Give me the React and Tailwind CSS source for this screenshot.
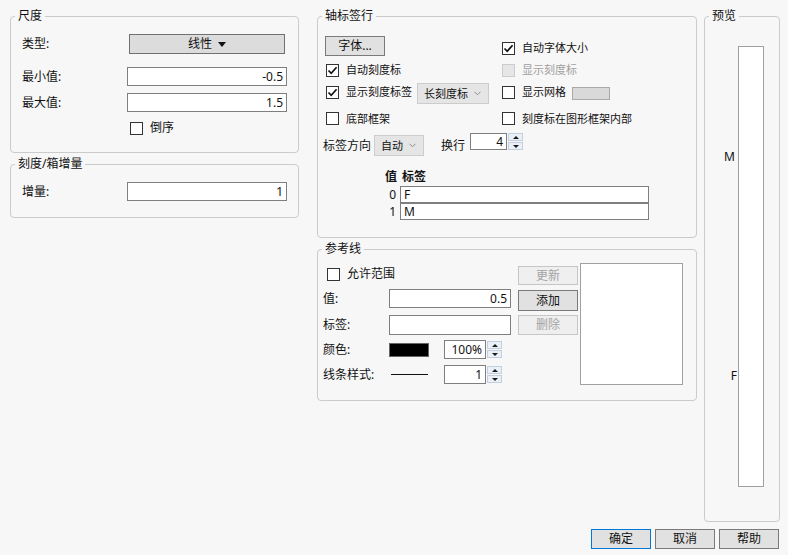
import React from 'react';

const Group = ({ title, className = '', children }) => (
  <fieldset className={`border border-[#cbcbcb] rounded-[4px] min-w-0 ${className}`}>
    <legend className="ml-[4px] px-[3px] text-[12px] leading-[16px] text-[#111]">{title}</legend>
    {children}
  </fieldset>
);

const Check = ({ checked, disabled, className = '' }) => (
  <span
    className={`w-[13px] h-[13px] shrink-0 flex items-center justify-center border ${
      disabled ? 'bg-[#e6e6e6] border-[#cccccc]' : 'bg-white border-[#333333]'
    } ${className}`}
  >
    {checked && (
      <svg width="11" height="11" viewBox="0 0 11 11">
        <path d="M1.5 5.5 L4.2 8.3 L9.6 2.2" fill="none" stroke="#111" strokeWidth="1.7" />
      </svg>
    )}
  </span>
);

const CheckRow = ({ label, checked, disabled, small, className = '' }) => (
  <div className={`flex items-center ${className}`}>
    <Check checked={checked} disabled={disabled} />
    <span
      className={`ml-[7px] leading-[14px] ${small ? 'text-[11px]' : ''} ${disabled ? 'text-[#a0a0a0]' : ''}`}
    >
      {label}
    </span>
  </div>
);

const Field = ({ value = '', className = '', align = 'text-right' }) => (
  <div
    className={`bg-white border border-[#7f7f7f] flex items-center px-[3px] leading-[14px] ${
      align === 'text-right' ? 'justify-end' : 'justify-start'
    } ${className}`}
  >
    {value}
  </div>
);

const Chevron = () => (
  <svg width="7" height="5" viewBox="0 0 7 5">
    <path d="M0.5 0.8 L3.5 3.8 L6.5 0.8" fill="none" stroke="#8a8a8a" strokeWidth="1" />
  </svg>
);

const Combo = ({ label, className = '' }) => (
  <div
    className={`bg-[#e5e5e5] border border-[#cccccc] flex items-center justify-between pl-[6px] pr-[7px] text-[11px] leading-[14px] ${className}`}
  >
    <span>{label}</span>
    <Chevron />
  </div>
);

const Spin = () => (
  <div className="flex flex-col w-[15px] ml-[1px] gap-[1px]">
    {['M1 4 L4 1 L7 4 Z', 'M1 1 L4 4 L7 1 Z'].map((d) => (
      <div key={d} className="h-[8px] bg-[#eaf0f7] border border-[#c3cfdf] flex items-center justify-center">
        <svg width="8" height="5" viewBox="0 0 8 5">
          <path d={d} fill="#1a1a1a" />
        </svg>
      </div>
    ))}
  </div>
);

const Btn = ({ label, disabled, primary, className = '' }) => (
  <div
    className={`flex items-center justify-center leading-[14px] border ${
      disabled
        ? 'bg-[#efefef] border-[#c6c6c6] text-[#a3a3a3]'
        : primary
        ? 'bg-[#e1e1e1] border-[#0078d7]'
        : 'bg-[#e1e1e1] border-[#7a7a7a]'
    } ${className}`}
  >
    {label}
  </div>
);

export default function App() {
  return (
    <div className="w-[788px] h-[555px] bg-[#f7f7f7] text-[12px] text-[#111] font-[family-name:'Noto_Sans','Noto_Sans_CJK_SC',sans-serif] pt-[8px] pl-[10px] pr-[8px] flex flex-col">
      <div className="flex items-start h-[514px]">
        {/* left column */}
        <div className="w-[289px] flex flex-col gap-[3px]">
          <Group title="尺度" className="h-[145px]">
            <div className="pl-[11px] flex flex-col">
              <div className="flex items-center h-[20px] mt-[10px]">
                <span className="w-[105px]">类型:</span>
                <div className="w-[156px] h-[20px] ml-[2px] bg-[#dcdcdc] border border-[#707070] flex items-center justify-center gap-[6px]">
                  <span className="leading-[14px]">线性</span>
                  <svg width="8" height="5" viewBox="0 0 8 5">
                    <path d="M0 0 L8 0 L4 5 Z" fill="#111" />
                  </svg>
                </div>
              </div>
              <div className="flex items-center h-[19px] mt-[13px]">
                <span className="w-[105px]">最小值:</span>
                <Field value="-0.5" className="w-[160px] h-[19px]" />
              </div>
              <div className="flex items-center h-[19px] mt-[7px]">
                <span className="w-[105px]">最大值:</span>
                <Field value="1.5" className="w-[160px] h-[19px]" />
              </div>
              <CheckRow label="倒序" className="mt-[9px] ml-[108px]" />
            </div>
          </Group>
          <Group title="刻度/箱增量" className="h-[62px]">
            <div className="pl-[11px] flex items-center h-[19px] mt-[10px]">
              <span className="w-[105px]">增量:</span>
              <Field value="1" className="w-[160px] h-[19px]" />
            </div>
          </Group>
        </div>

        {/* middle column */}
        <div className="w-[380px] ml-[18px] flex flex-col gap-[3px]">
          <Group title="轴标签行" className="h-[230px]">
            <div className="pl-[5px] flex flex-col">
              <div className="flex items-start h-[24px] mt-[12px]">
                <div className="w-[179px]">
                  <Btn label="字体..." className="w-[60px] h-[20px] ml-[2px]" />
                </div>
                <CheckRow label="自动字体大小" checked small className="h-[24px]" />
              </div>
              <div className="flex items-center h-[20px]">
                <div className="w-[179px]">
                  <CheckRow label="自动刻度标" checked small className="ml-[3px]" />
                </div>
                <CheckRow label="显示刻度标" disabled small />
              </div>
              <div className="flex items-start h-[21px] mt-[3px]">
                <div className="w-[179px] flex items-start">
                  <CheckRow label="显示刻度标签" checked small className="ml-[3px] mt-[2px]" />
                  <Combo label="长刻度标" className="w-[72px] h-[21px] ml-[5px]" />
                </div>
                <CheckRow label="显示网格" small className="mt-[2px]" />
                <div className="w-[38px] h-[13px] mt-[4px] ml-[6px] bg-[#d9d9d9] border border-[#a9a9a9]" />
              </div>
              <div className="flex items-center h-[21px] mt-[4px]">
                <div className="w-[179px]">
                  <CheckRow label="底部框架" small className="ml-[3px]" />
                </div>
                <CheckRow label="刻度标在图形框架内部" small />
              </div>
              <div className="flex items-start h-[23px] mt-[4px]">
                <span className="leading-[21px] mt-[2px]">标签方向</span>
                <Combo label="自动" className="w-[50px] h-[21px] mt-[2px] ml-[3px]" />
                <span className="leading-[21px] mt-[2px] ml-[17px]">换行</span>
                <Field value="4" className="w-[37px] h-[17px] ml-[5px]" />
                <Spin />
              </div>
              <div className="grid grid-cols-[18px_249px] gap-x-[3px] ml-[56px] mt-[14px]">
                <span className="text-right font-bold leading-[14px]">值</span>
                <span className="pl-[2px] font-bold leading-[14px]">标签</span>
                <span className="text-right pr-[1px] leading-[17px] mt-[2px]">0</span>
                <Field value="F" align="left" className="h-[17px] mt-[2px]" />
                <span className="text-right pr-[1px] leading-[17px]">1</span>
                <Field value="M" align="left" className="h-[17px]" />
              </div>
            </div>
          </Group>

          <Group title="参考线" className="h-[160px]">
            <div className="pl-[5px] flex items-start">
              <div className="w-[188px] flex flex-col">
                <CheckRow label="允许范围" className="mt-[10px] ml-[4px]" />
                <div className="flex items-center mt-[8px]">
                  <span className="w-[66px]">值:</span>
                  <Field value="0.5" className="w-[122px] h-[19px]" />
                </div>
                <div className="flex items-center mt-[7px]">
                  <span className="w-[66px]">标签:</span>
                  <Field className="w-[122px] h-[20px]" />
                </div>
                <div className="flex items-center mt-[5px]">
                  <span className="w-[66px]">颜色:</span>
                  <div className="w-[40px] h-[14px] bg-black border border-[#666]" />
                  <Field value="100%" className="w-[42px] h-[19px] ml-[15px]" />
                  <Spin />
                </div>
                <div className="flex items-center mt-[6px]">
                  <span className="w-[66px]">线条样式:</span>
                  <div className="w-[37px] h-[1px] bg-[#111] ml-[2px]" />
                  <Field value="1" className="w-[42px] h-[19px] ml-[16px]" />
                  <Spin />
                </div>
              </div>
              <div className="ml-[7px] w-[60px] flex flex-col">
                <Btn label="更新" disabled className="h-[19px] mt-[9px]" />
                <Btn label="添加" className="h-[21px] mt-[5px] bg-[#dcdcdc]" />
                <Btn label="删除" disabled className="h-[20px] mt-[4px]" />
              </div>
              <div className="ml-[2px] mt-[6px] w-[103px] h-[122px] bg-white border border-[#a0a0a0]" />
            </div>
          </Group>
        </div>

        {/* preview column */}
        <Group title="预览" className="w-[76px] h-[514px] ml-[7px]">
          <div className="relative ml-[33px] mt-[22px] w-[26px] h-[441px] bg-white border border-[#a0a0a0]">
            <span className="absolute right-full mr-[4px] top-[25%] -translate-y-1/2 leading-[12px]">M</span>
            <span className="absolute right-full mr-[2px] top-[75%] -translate-y-1/2 leading-[12px]">F</span>
          </div>
        </Group>
      </div>

      <div className="flex justify-end gap-[4px] mt-[7px] pr-[1px]">
        <Btn label="确定" primary className="w-[60px] h-[20px]" />
        <Btn label="取消" className="w-[60px] h-[20px]" />
        <Btn label="帮助" className="w-[60px] h-[20px]" />
      </div>
    </div>
  );
}
